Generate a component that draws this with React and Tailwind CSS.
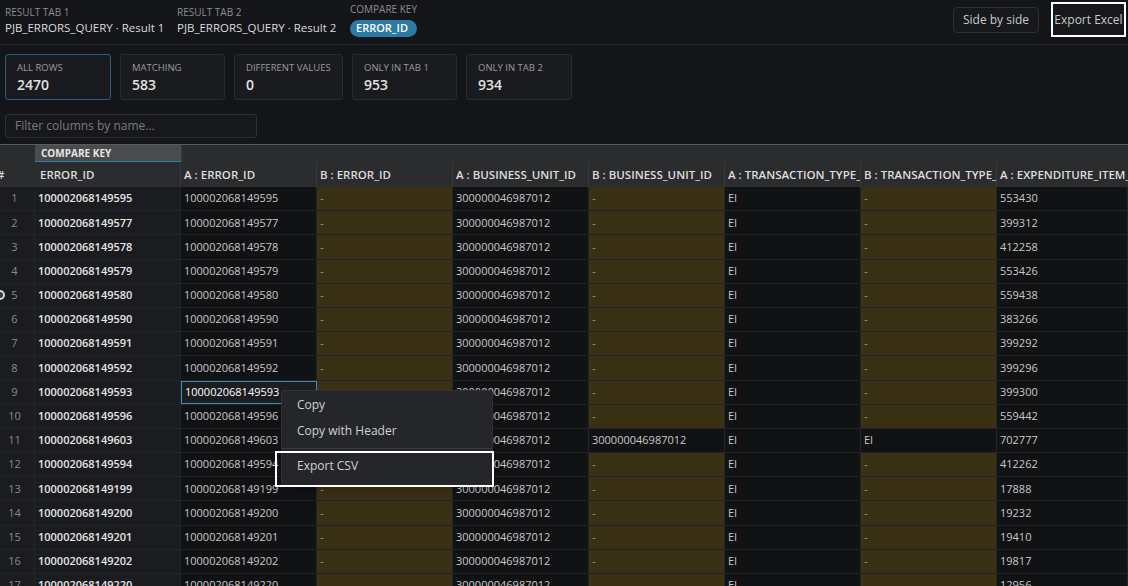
import React from 'react';

const rows = [
  ['100002068149595', '553430'],
  ['100002068149577', '399312'],
  ['100002068149578', '412258'],
  ['100002068149579', '553426'],
  ['100002068149580', '559438'],
  ['100002068149590', '383266'],
  ['100002068149591', '399292'],
  ['100002068149592', '399296'],
  ['100002068149593', '399300'],
  ['100002068149596', '559442'],
  ['100002068149603', '702777', true],
  ['100002068149594', '412262'],
  ['100002068149199', '17888'],
  ['100002068149200', '19232'],
  ['100002068149201', '19410'],
  ['100002068149202', '19817'],
  ['100002068149220', '12956'],
];

const stats = [
  { label: 'ALL ROWS', value: '2470', w: 'w-[106px]', active: true },
  { label: 'MATCHING', value: '583', w: 'w-[105px]' },
  { label: 'DIFFERENT VALUES', value: '0', w: 'w-[109px]' },
  { label: 'ONLY IN TAB 1', value: '953', w: 'w-[105px]' },
  { label: 'ONLY IN TAB 2', value: '934', w: 'w-[106px]' },
];

const headers = [
  'A : ERROR_ID',
  'B : ERROR_ID',
  'A : BUSINESS_UNIT_ID',
  'B : BUSINESS_UNIT_ID',
  'A : TRANSACTION_TYPE_',
  'B : TRANSACTION_TYPE_',
  'A : EXPENDITURE_ITEM_',
];

function Cell({ children, missing, selected, className = '' }) {
  let look = 'bg-[#111214] text-[#c9c9c9] border-r border-[#232427]';
  if (missing) look = 'bg-[#3a3014] text-[#a39a80] border-r border-[#232427]';
  if (selected) look = 'bg-[#1b1d20] text-white border border-[#3b8db5] pl-[2px]';
  return (
    <div
      className={`w-[136px] shrink-0 h-full flex items-center pl-[3px] whitespace-nowrap overflow-hidden ${look} ${className}`}
    >
      {children}
    </div>
  );
}

export default function App() {
  return (
    <div
      className="w-[1128px] h-[586px] overflow-hidden bg-[#141518] relative text-[#cfcfcf]"
      style={{ fontFamily: '"Open Sans", "Noto Sans", sans-serif' }}
    >
      {/* Top bar */}
      <div className="h-[45px] flex justify-between border-b border-[#2a2b2e] pl-[5px]">
        <div className="flex">
          <div className="w-[172px] pt-[6px]">
            <div className="text-[10px] leading-[13px] text-[#8d8d8d]">RESULT TAB 1</div>
            <div className="text-[11.5px] leading-[18px] text-[#dcdcdc]">PJB_ERRORS_QUERY · Result 1</div>
          </div>
          <div className="w-[173px] pt-[6px]">
            <div className="text-[10px] leading-[13px] text-[#8d8d8d]">RESULT TAB 2</div>
            <div className="text-[11.5px] leading-[18px] text-[#dcdcdc]">PJB_ERRORS_QUERY · Result 2</div>
          </div>
          <div className="pt-[3px]">
            <div className="text-[10px] leading-[13px] text-[#8d8d8d]">COMPARE KEY</div>
            <div className="mt-[4px] h-[17px] px-[6px] rounded-full bg-[#2b7aa3] text-white text-[11px] font-semibold flex items-center">
              ERROR_ID
            </div>
          </div>
        </div>
        <div className="flex items-start gap-[12px] pr-[2px]">
          <button className="mt-[7px] h-[26px] w-[86px] rounded border border-[#2e2f33] bg-[#17181b] text-[12px] text-[#c9c9c9]">
            Side by side
          </button>
          <button className="mt-[2px] h-[35px] w-[75px] border-2 border-white bg-[#17181b] text-[12px] text-[#c9c9c9]">
            Export Excel
          </button>
        </div>
      </div>

      {/* Stats */}
      <div className="flex gap-[9px] pl-[5px] pt-[9px]">
        {stats.map((s) => (
          <div
            key={s.label}
            className={`${s.w} h-[46px] rounded-[3px] border bg-[#1a1b1e] pl-[11px] pt-[7px] ${
              s.active ? 'border-[#2a5f7c]' : 'border-[#2a2b2f]'
            }`}
          >
            <div className="text-[9.5px] leading-[12px] text-[#9a9a9a]">{s.label}</div>
            <div className="text-[14px] leading-[20px] font-semibold text-[#e2e2e2] mt-[1px]">{s.value}</div>
          </div>
        ))}
      </div>

      {/* Filter */}
      <div className="pl-[5px] pt-[14px]">
        <div className="w-[252px] h-[24px] rounded-[3px] border border-[#2e2f33] bg-[#17181b] flex items-center pl-[9px] text-[12px] text-[#7b7b7b]">
          Filter columns by name...
        </div>
      </div>

      {/* Table */}
      <div className="mt-[6px] border-t border-[#5a5b5d] text-[11px]">
        {/* group header */}
        <div className="flex h-[17px] bg-[#2b2c2e]">
          <div className="w-[35px] shrink-0" />
          <div className="w-[146px] shrink-0 bg-[#4a4b4c] border-b border-[#2f7ea6] pl-[6px] flex items-center text-[10px] font-bold text-[#e6e6e6]">
            COMPARE KEY
          </div>
          <div className="flex-1 border-l border-[#3a3b3d]" />
        </div>
        {/* column header */}
        <div className="flex h-[25px] bg-[#2b2c2e] font-semibold text-[11.5px] text-[#dedede] whitespace-nowrap">
          <div className="w-[35px] shrink-0 flex items-center overflow-hidden">
            <span className="-ml-[3px]">#</span>
          </div>
          <div className="w-[146px] shrink-0 flex items-center pl-[5px] border-r border-[#38393b]">ERROR_ID</div>
          {headers.map((h) => (
            <div key={h} className="w-[136px] shrink-0 flex items-center pl-[3px] border-r border-[#38393b] overflow-hidden">
              {h}
            </div>
          ))}
        </div>
        {/* rows */}
        {rows.map(([id, exp, match], i) => (
          <div key={id} className="flex h-[24.2px] border-b border-[#222326] whitespace-nowrap">
            <div className="w-[35px] shrink-0 bg-[#1b1c1f] text-[#8a8a8a] flex items-center pl-[1px] border-r border-[#232427]">
              <span className="w-[27px] text-center">{i + 1}</span>
            </div>
            <div className="w-[146px] shrink-0 bg-[#1b1c1f] flex items-center pl-[3px] font-semibold text-[#e6e6e6] border-r border-[#232427]">
              {id}
            </div>
            <Cell selected={i === 8}>{id}</Cell>
            <Cell missing={!match}>{match ? id : '-'}</Cell>
            <Cell>300000046987012</Cell>
            <Cell missing={!match}>{match ? '300000046987012' : '-'}</Cell>
            <Cell>EI</Cell>
            <Cell missing={!match}>{match ? 'EI' : '-'}</Cell>
            <Cell className="flex-1">{exp}</Cell>
          </div>
        ))}
      </div>

      {/* cursor ring */}
      <div className="absolute left-[-5px] top-[290px] w-[10px] h-[10px] rounded-full border-2 border-[#d8d8d8] bg-[#3a3a3a]" />

      {/* Context menu */}
      <div className="absolute left-[281px] top-[390px] w-[212px] h-[96px] bg-[#252629] border border-[#313236] rounded-[3px] shadow-lg text-[12px] text-[#d2d2d2] pt-[1px]">
        <div className="h-[26px] flex items-center pl-[15px]">Copy</div>
        <div className="h-[26px] flex items-center pl-[15px]">Copy with Header</div>
        <div className="my-[4px] border-t border-[#3a3b3f]" />
        <div className="h-[26px] flex items-center pl-[15px]">Export CSV</div>
      </div>
      <div className="absolute left-[275px] top-[451px] w-[219px] h-[36px] border-2 border-white" />
    </div>
  );
}
